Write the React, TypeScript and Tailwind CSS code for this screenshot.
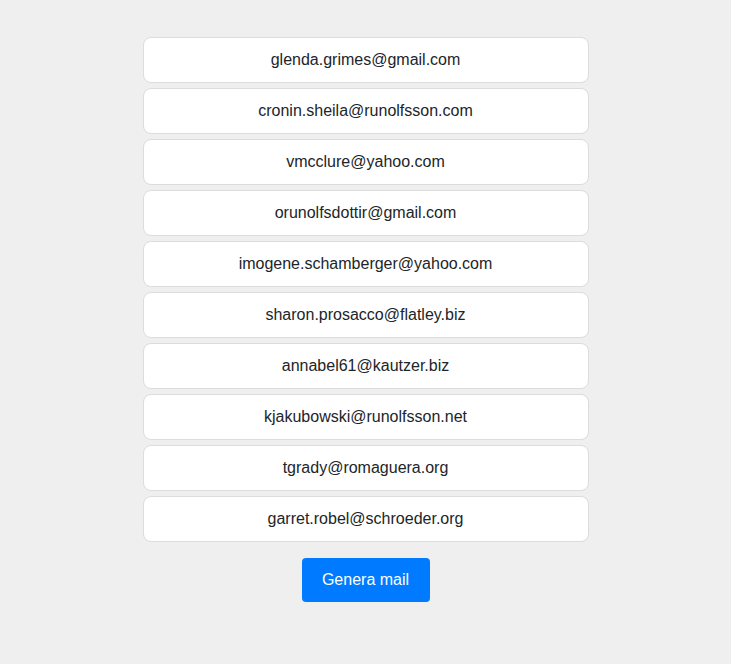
const emails = [
  'glenda.grimes@gmail.com',
  'cronin.sheila@runolfsson.com',
  'vmcclure@yahoo.com',
  'orunolfsdottir@gmail.com',
  'imogene.schamberger@yahoo.com',
  'sharon.prosacco@flatley.biz',
  'annabel61@kautzer.biz',
  'kjakubowski@runolfsson.net',
  'tgrady@romaguera.org',
  'garret.robel@schroeder.org',
];

export default function App() {
  return (
    <div className="min-h-[664px] bg-[#efefef] pt-[37px] font-['Liberation_Sans',Arial,sans-serif] text-[#212529]">
      <div className="mx-auto flex w-[446px] flex-col gap-[5px]">
        {emails.map((mail) => (
          <div
            key={mail}
            className="rounded-lg border border-[#dcdcdc] bg-white py-[10px] text-center text-base leading-6"
          >
            {mail}
          </div>
        ))}
      </div>
      <div className="mt-4 flex justify-center">
        <button className="h-[44px] w-[128px] rounded-[4px] bg-[#007bff] text-base leading-6 text-white">
          Genera mail
        </button>
      </div>
    </div>
  );
}
